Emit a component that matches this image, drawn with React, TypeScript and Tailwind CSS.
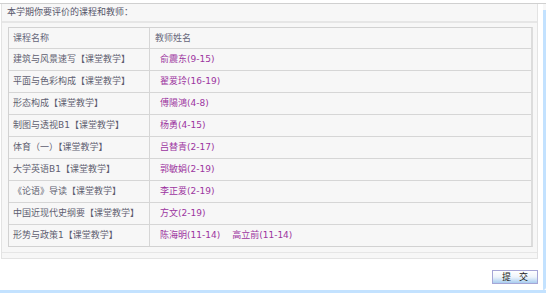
import React from "react";

const rows: { course: string; teachers: string[] }[] = [
  { course: "建筑与风景速写【课堂教学】", teachers: ["俞震东(9-15)"] },
  { course: "平面与色彩构成【课堂教学】", teachers: ["翟爱玲(16-19)"] },
  { course: "形态构成【课堂教学】", teachers: ["傅陽鴻(4-8)"] },
  { course: "制图与透视B1【课堂教学】", teachers: ["杨勇(4-15)"] },
  { course: "体育（一）【课堂教学】", teachers: ["吕替青(2-17)"] },
  { course: "大学英语B1【课堂教学】", teachers: ["郭敏娟(2-19)"] },
  { course: "《论语》导读【课堂教学】", teachers: ["李正爱(2-19)"] },
  { course: "中国近现代史纲要【课堂教学】", teachers: ["方文(2-19)"] },
  { course: "形势与政策1【课堂教学】", teachers: ["陈海明(11-14)", "高立前(11-14)"] },
];

const font = {
  fontFamily: '"DejaVu Sans", "Noto Sans CJK SC", sans-serif',
};

export default function App() {
  return (
    <div
      className="w-[546px] h-[293px] bg-white flex flex-col overflow-hidden text-[9px] leading-none"
      style={font}
    >
      <div className="h-[3px]" />
      <div className="h-px bg-[#d0d0d0]" />
      <div className="flex flex-1">
        <div className="w-[543px] flex flex-col">
          <div className="ml-[1px] w-[537px] bg-[#f7f7f7] border-l border-r border-b border-[#e3e3e3] flex flex-col">
            <div className="h-[19px] flex items-center px-[5px] text-[#55556a] border-b-2 border-[#e6e6e6]">
              本学期你要评价的课程和教师：
            </div>
            <div className="pt-[4px] pl-[6px] pr-[4px] pb-[5px] border-b border-[#e6e6e6]">
              <div className="w-[525px] border border-[#d2d2d2] border-r-2 border-r-[#dcdcdc]">
                <div className="flex h-[21px] border-b border-[#d6d6d6] text-[#66667a]">
                  <div className="w-[141px] border-r border-[#d6d6d6] flex items-center pl-[4px]">
                    课程名称
                  </div>
                  <div className="flex-1 flex items-center pl-[5px]">教师姓名</div>
                </div>
                {rows.map((r, i) => (
                  <div
                    key={i}
                    className={
                      i === rows.length - 1
                        ? "flex h-[21px]"
                        : "flex h-[22px] border-b border-[#d6d6d6]"
                    }
                  >
                    <div className="w-[141px] border-r border-[#d6d6d6] flex items-center pl-[4px] text-[#5e5e70]">
                      {r.course}
                    </div>
                    <div className="flex-1 flex items-center pl-[10px] gap-[12px] text-[#9c34a0]">
                      {r.teachers.map((t, j) => (
                        <span key={j}>{t}</span>
                      ))}
                    </div>
                  </div>
                ))}
              </div>
            </div>
            <div className="h-[5px]" />
          </div>
          <div className="flex justify-end mt-[11px] mr-[5px]">
            <button className="w-[46px] h-[14px] border border-[#a6a6d6] bg-gradient-to-b from-white via-[#eef4fb] to-[#a9cdef] text-[#222] text-[9px] flex items-center justify-center gap-[8px]">
              <span>提</span>
              <span>交</span>
            </button>
          </div>
        </div>
        <div className="w-[3px] flex flex-col">
          <div className="h-[6px] bg-[#f7f7f7]" />
          <div className="flex-1 bg-[#c3e2ff] rounded-br-[3px]" />
        </div>
      </div>
      <div className="h-[3px] bg-[#c3e2ff]" />
    </div>
  );
}
